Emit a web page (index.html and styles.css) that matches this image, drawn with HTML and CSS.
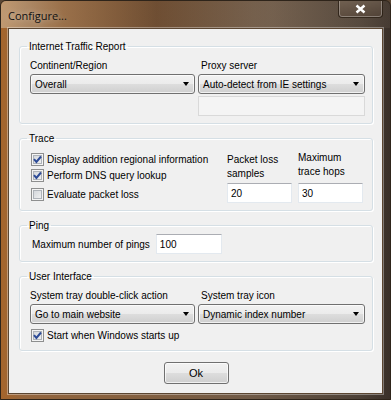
FILE: index.html
```html
<!DOCTYPE html>
<html lang="en">
<head>
    <meta charset="UTF-8">
    <meta name="viewport" content="width=device-width, initial-scale=1.0">
    <title>Configure...</title>
    <link rel="stylesheet" href="styles.css">
</head>

<body>
    <div class="window">
        <div class="titlebar">
            <span class="title">Configure...</span>
            <span class="close">
                <svg width="11" height="10" viewBox="0 0 11 10">
                    <path d="M1.5 1.5 L9.5 8.5 M9.5 1.5 L1.5 8.5" stroke="#fff" stroke-width="2.4" fill="none"/>
                </svg>
            </span>
        </div>

        <div class="client">
            <fieldset class="group">
                <legend>Internet Traffic Report</legend>
                <div class="pair">
                    <div class="field">
                        <label>Continent/Region</label>
                        <div class="combo"><span>Overall</span><i class="arrow"></i></div>
                    </div>
                    <div class="field">
                        <label class="shift">Proxy server</label>
                        <div class="combo"><span>Auto-detect from IE settings</span><i class="arrow"></i></div>
                        <input class="text off" type="text" disabled>
                    </div>
                </div>
            </fieldset>

            <fieldset class="group">
                <legend>Trace</legend>
                <div class="trace">
                    <div class="checks">
                        <div class="check-row">
                            <span class="check on"><svg width="9" height="9" viewBox="0 0 9 9"><path d="M1 4.2 L3.4 7 L8 1.5" stroke="#2d4b97" stroke-width="2" fill="none"/></svg></span>
                            <span>Display addition regional information</span>
                        </div>
                        <div class="check-row">
                            <span class="check on"><svg width="9" height="9" viewBox="0 0 9 9"><path d="M1 4.2 L3.4 7 L8 1.5" stroke="#2d4b97" stroke-width="2" fill="none"/></svg></span>
                            <span>Perform DNS query lookup</span>
                        </div>
                        <div class="check-row last">
                            <span class="check"></span>
                            <span>Evaluate packet loss</span>
                        </div>
                    </div>
                    <div class="field bottom">
                        <label class="two">Packet loss<br>samples</label>
                        <input class="text" type="text" value="20">
                    </div>
                    <div class="field bottom">
                        <label class="two up">Maximum<br>trace hops</label>
                        <input class="text" type="text" value="30">
                    </div>
                </div>
            </fieldset>

            <fieldset class="group">
                <legend>Ping</legend>
                <div class="ping">
                    <label>Maximum number of pings</label>
                    <input class="text" type="text" value="100">
                </div>
            </fieldset>

            <fieldset class="group">
                <legend>User Interface</legend>
                <div class="pair">
                    <div class="field">
                        <label>System tray double-click action</label>
                        <div class="combo"><span>Go to main website</span><i class="arrow"></i></div>
                    </div>
                    <div class="field">
                        <label class="shift">System tray icon</label>
                        <div class="combo"><span>Dynamic index number</span><i class="arrow"></i></div>
                    </div>
                </div>
                <div class="check-row startup">
                    <span class="check on"><svg width="9" height="9" viewBox="0 0 9 9"><path d="M1 4.2 L3.4 7 L8 1.5" stroke="#2d4b97" stroke-width="2" fill="none"/></svg></span>
                    <span>Start when Windows starts up</span>
                </div>
            </fieldset>

            <div class="buttons">
                <button class="btn">Ok</button>
            </div>
        </div>
    </div>
</body>
</html>
```

FILE: styles.css
```css
*, *:before, *:after {
    box-sizing: border-box;
}

body {
    margin: 0;
    background-color: #5a4634;
    font-family: "Liberation Sans", Arial, sans-serif;
    font-size: 10px;
    line-height: 13px;
    color: #000;
}

.window {
    width: 391px;
    height: 400px;
    border: 1px solid #2e241a;
    border-radius: 6px 6px 0 0;
    background: linear-gradient(to right, #a5652c 0%, #94663e 6%, #86603e 30%, #6f5a47 65%, #4c4036 92%, #3a3029 100%);
    overflow: hidden;
}

.titlebar {
    height: 27px;
    display: flex;
    justify-content: space-between;
    padding-left: 7px;
    background: linear-gradient(to right, rgba(214, 196, 170, 0.55) 0%, rgba(180, 140, 100, 0.3) 16%, rgba(60, 30, 10, 0.25) 40%, rgba(150, 130, 110, 0.25) 70%, rgba(120, 105, 90, 0.2) 100%);
}

.title {
    font-family: "Open Sans", "Noto Sans", sans-serif;
    font-size: 11px;
    line-height: 30px;
    color: #111;
    text-shadow: 0 0 6px rgba(255, 255, 255, 0.5);
}

.close {
    width: 45px;
    height: 18px;
    margin-right: 7px;
    margin-top: -1px;
    display: flex;
    align-items: center;
    justify-content: center;
    border: 1px solid rgba(30, 20, 10, 0.7);
    border-top: none;
    border-radius: 0 0 4px 4px;
    box-shadow: inset 0 0 0 1px rgba(255, 255, 255, 0.3);
    background: linear-gradient(rgba(150, 130, 110, 0.35), rgba(90, 70, 55, 0.35));
}

.client {
    height: 366px;
    margin: 0 7px;
    border: 1px solid #5b4632;
    box-shadow: 0 0 0 1px rgba(255, 255, 255, 0.35);
    background-color: #f0f0f0;
    padding: 11px 9px 0 10px;
}

.group {
    margin: 0 0 8px 0;
    padding: 6px 8px 7px 10px;
    border: 1px solid #d5dfe5;
    border-radius: 3px;
    box-shadow: inset 1px 1px 0 #fff, 1px 1px 0 #fff;
    min-width: 0;
}

.group legend {
    padding: 0 2px;
    margin-left: -3px;
    line-height: 13px;
}

.pair {
    display: grid;
    grid-template-columns: 165px 167px;
    column-gap: 3px;
}

.field {
    display: flex;
    flex-direction: column;
}

.field label {
    margin-bottom: 2px;
    white-space: nowrap;
}

.field .shift {
    padding-left: 3px;
}

.combo {
    height: 20px;
    display: flex;
    align-items: center;
    justify-content: space-between;
    padding: 0 5px 0 4px;
    border: 1px solid #707070;
    border-radius: 3px;
    background: linear-gradient(#f2f2f2 0%, #ebebeb 50%, #dddddd 51%, #cfcfcf 100%);
    box-shadow: inset 0 0 0 1px rgba(255, 255, 255, 0.7);
    white-space: nowrap;
}

.arrow {
    width: 0;
    height: 0;
    border-style: solid;
    border-width: 4px 3.5px 0 3.5px;
    border-color: #000 transparent transparent transparent;
}

.text {
    height: 20px;
    padding: 0 3px;
    border: 1px solid #e3e9ef;
    border-top-color: #abadb3;
    background-color: #fff;
    font-family: "Liberation Sans", Arial, sans-serif;
    font-size: 10px;
    color: #000;
    outline: none;
}

.text.off {
    margin-top: 2px;
    border-color: #d9d9d9;
    background-color: #f4f4f4;
}

.trace {
    display: grid;
    grid-template-columns: 191px 65px 65px;
    column-gap: 6px;
}

.check-row {
    height: 16px;
    display: flex;
    align-items: center;
    gap: 3px;
    padding-left: 1px;
    white-space: nowrap;
}

.check-row.last {
    margin-top: 3px;
}

.check {
    flex: none;
    width: 13px;
    height: 13px;
    display: flex;
    align-items: center;
    justify-content: center;
    border: 1px solid #8e8f8f;
    background: linear-gradient(135deg, #cdd1d6, #f6f6f6);
    box-shadow: inset 0 0 0 1px #f4f4f4, inset 0 0 0 2px #aeb3b9;
}

.bottom {
    justify-content: flex-end;
}

.field .two {
    line-height: 14px;
    margin-bottom: 2px;
}

.field .two.up {
    margin-bottom: 4px;
}

.ping {
    display: flex;
    align-items: center;
    gap: 6px;
    margin-top: -4px;
    padding-left: 2px;
}

.ping .text {
    width: 66px;
}

.startup {
    margin-top: 3px;
}

.buttons {
    display: flex;
    justify-content: center;
    padding-top: 3px;
}

.btn {
    width: 65px;
    height: 22px;
    padding: 0;
    border: 1px solid #707070;
    border-radius: 3px;
    background: linear-gradient(#f2f2f2 0%, #ebebeb 50%, #dddddd 51%, #cfcfcf 100%);
    box-shadow: inset 0 0 0 1px rgba(255, 255, 255, 0.7);
    font-family: "Liberation Sans", Arial, sans-serif;
    font-size: 11px;
    color: #000;
}
```
